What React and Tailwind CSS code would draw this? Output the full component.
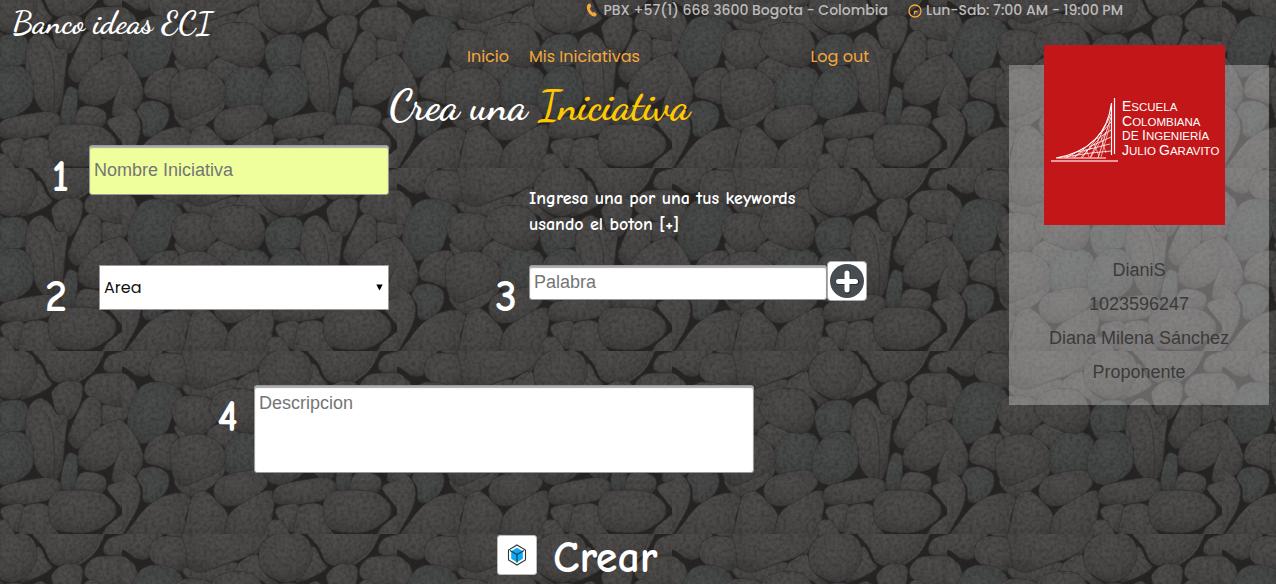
import React from "react";

// Outlines of the pebbles on one 825 x 549 tile, back to front.
const STONES = [
  [[-10,-20],[120,-20],[100,35],[78,72],[45,74],[10,50],[-10,40]],
  [[130,-20],[200,-20],[195,15],[140,6]],
  [[82,45],[100,15],[140,6],[190,20],[196,105],[160,108],[110,95],[86,75]],
  [[335,110],[400,60],[430,120],[470,150],[440,165],[420,140]],
  [[400,-20],[480,-20],[450,15],[415,50],[390,60]],
  [[186,100],[250,110],[330,84],[345,100],[290,140],[230,142],[190,125]],
  [[200,-20],[430,-20],[418,30],[380,65],[310,90],[240,115],[200,100],[192,50]],
  [[-10,75],[30,85],[46,120],[35,165],[10,205],[-10,210]],
  [[16,205],[30,150],[60,105],[110,92],[165,110],[182,150],[150,200],[130,245],[70,277],[30,260]],
  [[160,225],[240,245],[220,275],[180,270]],
  [[150,190],[160,150],[200,134],[265,145],[290,190],[270,230],[230,252],[180,240]],
  [[255,250],[300,215],[350,240],[325,290],[305,290]],
  [[305,350],[310,290],[350,247],[410,245],[440,275],[425,330],[420,360],[340,374]],
  [[262,170],[290,125],[350,112],[400,125],[430,180],[420,225],[390,248],[330,235],[285,210]],
  [[-10,215],[30,240],[60,300],[62,340],[40,372],[-10,370]],
  [[66,310],[85,270],[120,250],[165,252],[160,290],[150,355],[110,345],[75,335]],
  [[160,385],[230,385],[300,345],[305,370],[270,405],[215,437],[175,420]],
  [[145,330],[150,280],[185,255],[240,250],[290,275],[313,320],[290,360],[240,385],[190,403],[158,385]],
  [[45,380],[65,352],[110,350],[140,375],[135,415],[100,452],[65,450],[60,410]],
  [[-10,368],[30,372],[54,410],[50,460],[20,520],[-10,550]],
  [[15,570],[40,510],[90,455],[150,428],[195,430],[206,455],[190,500],[180,570]],
  [[190,570],[195,500],[210,440],[245,420],[280,445],[318,495],[308,570]],
  [[275,420],[290,385],[340,365],[410,358],[435,380],[430,410],[380,450],[330,465],[290,455]],
  [[310,530],[330,480],[390,440],[440,418],[457,440],[450,500],[430,570],[320,570]],
  [[520,140],[570,40],[600,80],[615,100],[580,125]],
  [[660,110],[740,60],[780,-20],[740,-20],[680,50]],
  [[410,80],[420,30],[460,0],[520,-5],[560,20],[570,70],[540,125],[490,145],[430,118]],
  [[560,-20],[590,40],[620,90],[680,90],[740,50],[752,10],[750,-20]],
  [[770,40],[790,12],[840,5],[840,65],[780,62]],
  [[765,165],[840,158],[840,215],[768,220]],
  [[712,110],[740,72],[800,66],[840,75],[840,160],[790,163],[730,140]],
  [[616,120],[650,92],[700,95],[706,130],[690,180],[665,205],[630,185],[618,150]],
  [[665,250],[690,190],[715,145],[745,138],[764,165],[760,225],[725,270],[690,292],[668,275]],
  [[692,320],[710,270],[770,222],[840,208],[840,290],[790,345],[740,362],[700,345]],
  [[430,190],[460,155],[520,148],[546,180],[540,230],[500,245],[460,268],[435,235]],
  [[535,240],[545,170],[580,142],[615,165],[630,190],[660,195],[655,260],[645,350],[625,385],[585,375],[555,320]],
  [[420,330],[440,280],[480,245],[530,248],[558,290],[555,350],[520,385],[470,402],[430,380]],
  [[640,400],[650,340],[665,307],[690,315],[692,350],[682,415],[650,418]],
  [[452,435],[470,405],[540,388],[610,380],[642,400],[630,435],[570,455],[500,462],[460,455]],
  [[682,410],[700,368],[740,364],[776,385],[765,425],[690,425]],
  [[796,370],[815,310],[840,290],[840,395],[800,393]],
  [[780,410],[805,395],[840,395],[840,480],[800,440]],
  [[770,540],[800,510],[840,490],[840,570],[770,570]],
  [[460,480],[490,462],[530,465],[525,540],[490,530]],
  [[522,500],[540,462],[600,463],[615,520],[640,570],[525,570]],
  [[430,570],[440,515],[480,510],[505,570]],
  [[603,470],[625,425],[690,417],[760,425],[803,460],[800,500],[740,540],[680,545],[620,530]],
];

// Pebbles with a slightly bluish tint.
const COOL = new Set([12, 8, 18, 34, 36, 37]);

function smoothPath(points) {
  const n = points.length;
  let d = `M${points[0][0]} ${points[0][1]}`;
  for (let i = 0; i < n; i++) {
    const [a, b, c, e] = [points[(i - 1 + n) % n], points[i], points[(i + 1) % n], points[(i + 2) % n]];
    d += `C${b[0] + (c[0] - a[0]) / 6} ${b[1] + (c[1] - a[1]) / 6} ${c[0] - (e[0] - b[0]) / 6} ${c[1] - (e[1] - b[1]) / 6} ${c[0]} ${c[1]}`;
  }
  return d + "Z";
}

function Pebbles() {
  return (
    <svg className="absolute inset-0 -z-10 h-full w-full" aria-hidden="true">
      <defs>
        <radialGradient id="stone" cx="0.45" cy="0.3" r="0.8">
          <stop offset="0" stopColor="#504e4d" />
          <stop offset="0.6" stopColor="#494746" />
          <stop offset="1" stopColor="#393736" />
        </radialGradient>
        <radialGradient id="coolStone" cx="0.45" cy="0.35" r="0.8">
          <stop offset="0" stopColor="#4b4c4c" />
          <stop offset="0.6" stopColor="#444545" />
          <stop offset="1" stopColor="#363636" />
        </radialGradient>
        <filter id="grain" x="0" y="0" width="1" height="1" colorInterpolationFilters="sRGB">
          <feTurbulence type="fractalNoise" baseFrequency="0.09" numOctaves="3" seed="4" />
          <feColorMatrix values="0 0 0 0 0.1  0 0 0 0 0.1  0 0 0 0 0.1  0.7 0 0 0 -0.25" />
        </filter>
        <pattern id="pebbles" x="-153" y="-15" width="275" height="183" patternUnits="userSpaceOnUse" viewBox="0 0 825 549">
          <rect width="825" height="549" fill="#272524" />
          {STONES.map((points, i) => (
            <path
              key={i}
              d={smoothPath(points)}
              fill={COOL.has(i) ? "url(#coolStone)" : "url(#stone)"}
              stroke="#302e2d"
              strokeWidth="2"
            />
          ))}
          <path d="M598 190Q625 215 622 375M655 200L630 235" fill="none" stroke="#383635" strokeWidth="3" />
          <rect width="825" height="549" filter="url(#grain)" />
        </pattern>
      </defs>
      <rect width="100%" height="100%" fill="url(#pebbles)" />
    </svg>
  );
}

function Phone() {
  return (
    <svg viewBox="0 0 14 14" className="h-[14px] w-[14px]" aria-hidden="true">
      <path d="M3.400 1 5.500.6 6.200 4 4.800 5C5.200 6.900 6.400 8.700 7.900 9.700L9.400 9 11.900 11.500 10.300 13.600C5.600 13.600.8 7.300 2 2.400Z" fill="#f5a83a" />
    </svg>
  );
}

function Clock() {
  return (
    <svg viewBox="0 0 14 14" className="mt-0.5 h-[14px] w-[14px]" fill="none" stroke="#f5a83a" strokeWidth="1.3" aria-hidden="true">
      <circle cx="7" cy="7" r="6" />
      <path d="M6.500 10.500V7.500h3" />
    </svg>
  );
}

function Plus() {
  return (
    <svg viewBox="0 0 36 36" className="h-9 w-9" aria-hidden="true">
      <circle cx="18" cy="18" r="17" fill="#474c50" />
      <path d="M18.500 10v18M9.500 19h18" stroke="#2c3033" strokeWidth="6" strokeLinecap="round" />
      <path d="M18 10v17M9.500 18.500h17" stroke="#fff" strokeWidth="5" strokeLinecap="round" />
    </svg>
  );
}

function Cube() {
  return (
    <svg viewBox="0 0 20 22" className="h-[22px] w-5" fill="none" aria-hidden="true">
      <path d="M10 1 18.500 6v10L10 21 1.500 16V6Z" stroke="#333" strokeWidth="1.1" />
      <path d="M10 3.800 15.800 7.200v7.600L10 18.200 4.200 14.800V7.200Z" fill="#0da9f2" />
      <path d="M3 6.500 10 10.500 17 6.500M10 10.500V18.500" stroke="#124256" strokeWidth="1.2" />
    </svg>
  );
}

function SchoolLogo() {
  return (
    <svg viewBox="0 0 181 180" className="-mt-5 ml-[35px] h-[180px] w-[181px] self-start" role="img" aria-label="Escuela Colombiana de Ingeniería Julio Garavito">
      <rect width="181" height="180" fill="#c31619" />
      <g fill="none" stroke="#fff">
        <path d="M70.500 53v56" strokeWidth="1.2" />
        <path d="M7 116h67" stroke="#e99a9b" strokeWidth="2" />
        <path d="M12 113Q62 104 67.500 58V110M12 113H62" strokeWidth="1.2" />
        <path d="M22 113 40 103M30 113 50 95M38 113 57 87M46 113 62 79M54 113 67 72M20 112 47 108 67 106M34 107 66 99M45 102 67 92M53 94 67 85M59 86 67 77M63 78 67 69" strokeWidth="0.8" />
        <path d="M28 112 48 103M37 112 55 94M47 112 62 87M57 112 66 80M42 104 45 112M50 99 55 111M57 92 62 108" strokeWidth="0.6" />
      </g>
      <g fill="#fff" fontFamily="'Liberation Sans', Arial, sans-serif" fontSize="11">
        <text x="78" y="66" fontSize="11.500"><tspan fontSize="14">E</tspan>SCUELA</text>
        <text x="78" y="81" fontSize="11.500"><tspan fontSize="14">C</tspan>OLOMBIANA</text>
        <text x="78" y="95" fontSize="11.500"><tspan fontSize="12">DE </tspan><tspan fontSize="14">I</tspan>NGENIERÍA</text>
        <text x="78" y="110" fontSize="11.500"><tspan fontSize="14">J</tspan>ULIO <tspan fontSize="14">G</tspan>ARAVITO</text>
      </g>
    </svg>
  );
}

const SCRIPT = "font-['Satisfy','Dancing_Script','Kaushan_Script','Liberation_Serif',cursive]";
const COMIC = "font-['Comic_Sans_MS','Comic_Neue','Lato',sans-serif]";
const POPPINS = "font-['Poppins','Inter',sans-serif]";
const ARIAL = "font-['Liberation_Sans',Arial,sans-serif]";
const FIELD = `${ARIAL} rounded-[3px] border border-[#999] px-1 text-lg text-[#222] placeholder-[#757575] shadow-[inset_0_2px_1px_#aaa] outline-none`;
const NUMBER = `${COMIC} shrink-0 text-right text-[44px] leading-[64px] font-bold text-white`;

export default function App() {
  return (
    <div className="relative isolate min-h-screen overflow-hidden bg-[#333]">
      <Pebbles />
      <header className="flex h-[45px] items-start justify-between pr-[153px] pl-3">
        <a href="#inicio" className={`${SCRIPT} text-[32px] leading-[46px] font-bold text-white`}>Banco ideas ECI</a>
        <div className={`${POPPINS} flex gap-5 text-sm leading-5 font-medium text-[#bcbbba]`}>
          <span className="flex items-center gap-1"><Phone />PBX +57(1) 668 3600 Bogota - Colombia</span>
          <span className="flex items-center gap-1"><Clock />Lun-Sab: 7:00 AM - 19:00 PM</span>
        </div>
      </header>

      <div className="flex items-start">
        <main className="min-w-0 flex-1">
          <nav className={`${POPPINS} flex w-[869px] gap-5 pl-[467px] text-base leading-6 text-[#f5a83a]`}>
            <a href="#inicio">Inicio</a>
            <a href="#iniciativas">Mis Iniciativas</a>
            <a href="#salir" className="ml-auto">Log out</a>
          </nav>
          <h1 className={`${SCRIPT} h-[76px] pl-[389px] text-[42px] leading-[74px] font-bold text-white`}>
            Crea una <span className="text-[#ffc800]">Iniciativa</span>
          </h1>

          <form onSubmit={(e) => e.preventDefault()}>
            <div className="flex h-60 items-start">
              <div className="flex w-[389px] flex-col gap-[56px]">
                <div className="flex items-start justify-end gap-5">
                  <label htmlFor="nombre" className={NUMBER}>1</label>
                  <input id="nombre" placeholder="Nombre Iniciativa" className={`${FIELD} h-[50px] w-[300px] bg-[#eeff9c]`} />
                </div>
                <div className="flex items-start justify-end gap-8">
                  <label htmlFor="area" className={NUMBER}>2</label>
                  <div className="relative w-[290px]">
                    <select id="area" className={`${POPPINS} h-[45px] w-full appearance-none border border-[#999] bg-white px-1 text-base text-[#111]`}>
                      <option>Area</option>
                    </select>
                    <svg viewBox="0 0 7 7" className="pointer-events-none absolute top-[19px] right-1.5 h-[7px] w-[7px]" aria-hidden="true">
                      <path d="M.3.500h6.400L3.500 6.500Z" fill="#000" />
                    </svg>
                  </div>
                </div>
              </div>
              <div className="flex flex-col gap-[27px] pt-[41px]">
                <p className={`${COMIC} ml-[140px] w-[290px] text-lg leading-[26px] font-bold text-white`}>
                  Ingresa una por una tus keywords usando el boton [+]
                </p>
                <div className="flex items-start">
                  <label htmlFor="palabra" className={`${NUMBER} mr-3 w-[128px]`}>3</label>
                  <input id="palabra" placeholder="Palabra" className={`${FIELD} h-[35px] w-[298px] bg-white`} />
                  <button type="button" aria-label="Agregar" className="-mt-1 flex h-10 w-10 items-center justify-center rounded-sm border border-[#aaa] bg-white">
                    <Plus />
                  </button>
                </div>
              </div>
            </div>

            <div className="flex h-[150px] items-start gap-4">
              <label htmlFor="descripcion" className={`${NUMBER} w-[238px]`}>4</label>
              <textarea id="descripcion" placeholder="Descripcion" className={`${FIELD} h-[88px] w-[500px] resize-none bg-white pt-[3px]`} />
            </div>

            <div className="flex items-start gap-4 pl-[497px]">
              <button type="submit" id="crear" aria-labelledby="crear-label" className="flex h-10 w-10 items-center justify-center rounded-[3px] border border-[#bbb] bg-white">
                <Cube />
              </button>
              <label id="crear-label" htmlFor="crear" className={`${COMIC} text-[44px] leading-[46px] font-bold text-white`}>Crear</label>
            </div>
          </form>
        </main>

        <aside className="mt-5 mr-[7px] flex h-[340px] w-[260px] shrink-0 flex-col items-center bg-white/30">
          <SchoolLogo />
          <div className={`${ARIAL} pt-7 text-center text-lg leading-[34px] text-[#3b3a39]`}>
            <p>DianiS</p>
            <p>1023596247</p>
            <p>Diana Milena Sánchez</p>
            <p>Proponente</p>
          </div>
        </aside>
      </div>
    </div>
  );
}
